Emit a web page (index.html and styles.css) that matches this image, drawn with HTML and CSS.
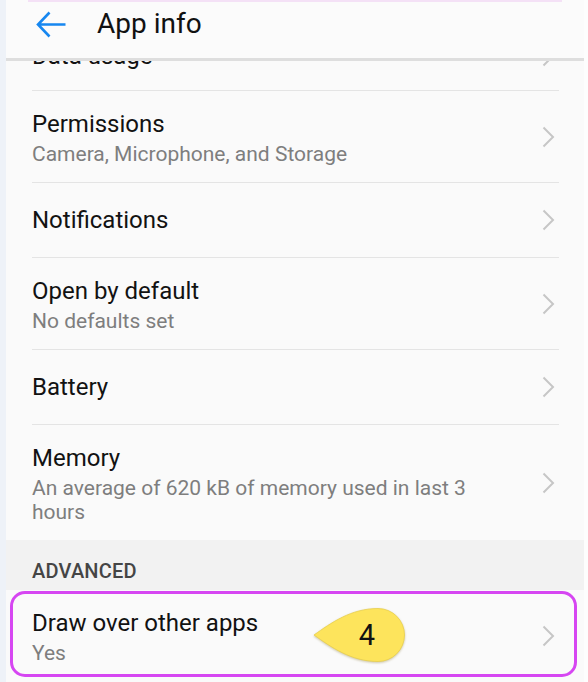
FILE: index.html
```html
<!DOCTYPE html>
<html lang="en">
<head>
<meta charset="utf-8">
<title>App info</title>
<link rel="stylesheet" href="styles.css">
</head>
<body>
<div class="screen">
  <div class="edge"></div>
  <div class="panel">
    <div class="mark-top"></div>
    <header class="appbar">
      <svg class="back" width="30" height="27" viewBox="0 0 30 27" aria-hidden="true">
        <path d="M2 13.5H29.5M13.5 1.5 2 13.5 13.5 25.5" fill="none" stroke="#1787f0" stroke-width="2.6" stroke-linejoin="miter"/>
      </svg>
      <h1 class="appbar__title">App info</h1>
    </header>
    <div class="viewport">
      <ul class="list">
        <li class="row row--peek">
          <div class="row__text"><div class="row__title">Data usage</div></div>
          <svg class="chev" width="13" height="22" viewBox="0 0 13 22"><path d="M1.5 1.5 11 11 1.5 20.5" fill="none" stroke="#c6c6c6" stroke-width="2"/></svg>
        </li>
        <li class="row">
          <div class="row__text">
            <div class="row__title">Permissions</div>
            <div class="row__sub">Camera, Microphone, and Storage</div>
          </div>
          <svg class="chev" width="13" height="22" viewBox="0 0 13 22"><path d="M1.5 1.5 11 11 1.5 20.5" fill="none" stroke="#c6c6c6" stroke-width="2"/></svg>
        </li>
        <li class="row">
          <div class="row__text"><div class="row__title">Notifications</div></div>
          <svg class="chev" width="13" height="22" viewBox="0 0 13 22"><path d="M1.5 1.5 11 11 1.5 20.5" fill="none" stroke="#c6c6c6" stroke-width="2"/></svg>
        </li>
        <li class="row">
          <div class="row__text">
            <div class="row__title">Open by default</div>
            <div class="row__sub">No defaults set</div>
          </div>
          <svg class="chev" width="13" height="22" viewBox="0 0 13 22"><path d="M1.5 1.5 11 11 1.5 20.5" fill="none" stroke="#c6c6c6" stroke-width="2"/></svg>
        </li>
        <li class="row">
          <div class="row__text"><div class="row__title">Battery</div></div>
          <svg class="chev" width="13" height="22" viewBox="0 0 13 22"><path d="M1.5 1.5 11 11 1.5 20.5" fill="none" stroke="#c6c6c6" stroke-width="2"/></svg>
        </li>
        <li class="row row--last">
          <div class="row__text">
            <div class="row__title">Memory</div>
            <div class="row__sub">An average of 620 kB of memory used in last 3 hours</div>
          </div>
          <svg class="chev" width="13" height="22" viewBox="0 0 13 22"><path d="M1.5 1.5 11 11 1.5 20.5" fill="none" stroke="#c6c6c6" stroke-width="2"/></svg>
        </li>
      </ul>
      <div class="section-head">ADVANCED</div>
      <ul class="list">
        <li class="row row--marked">
          <div class="row__text">
            <div class="row__title">Draw over other apps</div>
            <div class="row__sub">Yes</div>
          </div>
          <svg class="chev" width="13" height="22" viewBox="0 0 13 22"><path d="M1.5 1.5 11 11 1.5 20.5" fill="none" stroke="#c6c6c6" stroke-width="2"/></svg>
          <div class="highlight"></div>
          <div class="callout">
            <svg class="callout__shape" width="94" height="58" viewBox="0 0 94 58" aria-hidden="true">
              <path d="M1 28 C 18 16, 38 1.5, 65 1.5 A 26.5 26.5 0 1 1 65 54.5 C 38 54.5, 18 40, 1 28 Z" fill="#fde45c" stroke="#e9cf4a" stroke-width="0.8"/>
            </svg>
            <span class="callout__num">4</span>
          </div>
        </li>
      </ul>
    </div>
  </div>
  <div class="gutter"></div>
</div>
</body>
</html>
```

FILE: styles.css
```css
* { box-sizing: border-box; }

html, body {
  margin: 0;
  padding: 0;
  background: #fdfdfd;
}

body {
  font-family: Roboto, "Noto Sans", "Liberation Sans", sans-serif;
  color: #141414;
}

.screen {
  display: flex;
  width: 588px;
  height: 682px;
  overflow: hidden;
}

.edge {
  width: 6px;
  flex: none;
  background: #eef2f8;
}

.gutter {
  flex: 1;
  background: #fdfdfd;
}

.panel {
  position: relative;
  width: 578px;
  flex: none;
  display: flex;
  flex-direction: column;
  background: #fafafa;
}

.mark-top {
  position: absolute;
  left: 22px;
  top: 0;
  width: 534px;
  height: 2px;
  background: #f4e1f6;
  z-index: 3;
}

.appbar {
  flex: none;
  height: 61px;
  display: flex;
  align-items: flex-start;
  padding: 7px 0 0 30px;
  background: #fbfbfb;
  border-bottom: 3px solid #dedede;
  position: relative;
  z-index: 2;
}

.back {
  flex: none;
  margin-top: 4px;
  display: block;
}

.appbar__title {
  margin: 0 0 0 31px;
  font-size: 28px;
  line-height: 34px;
  font-weight: 400;
  color: #111;
}

.viewport {
  flex: 1;
  overflow: hidden;
}

.list {
  list-style: none;
  margin: 0;
  padding: 0;
}

.row {
  position: relative;
  display: flex;
  align-items: center;
  min-height: 75px;
  margin: 0 25px 0 26px;
  padding: 16.5px 4px 16.5px 0;
  border-bottom: 1px solid #e4e4e4;
}

.row--peek {
  margin-top: -39px;
  min-height: 69px;
}

.row--last {
  border-bottom: none;
}

.row--marked {
  border-bottom: none;
}

.row__text {
  flex: 1;
  min-width: 0;
  padding-right: 52px;
}

.row__title {
  font-size: 24px;
  line-height: 32px;
  color: #121212;
}

.row__sub {
  margin-top: 2px;
  font-size: 21px;
  line-height: 24px;
  color: #7e7e7e;
}

.chev {
  flex: none;
  display: block;
}

.section-head {
  height: 50px;
  padding: 20px 0 0 26px;
  background: #f2f2f2;
  font-size: 20px;
  line-height: 22px;
  font-weight: 500;
  letter-spacing: 0.2px;
  color: #454545;
}

.highlight {
  position: absolute;
  left: -22px;
  right: -18px;
  top: 1px;
  height: 86px;
  border: 3px solid #d646f2;
  border-radius: 15px;
  pointer-events: none;
}

.callout {
  position: absolute;
  left: 281px;
  top: 17px;
  width: 94px;
  height: 58px;
}

.callout__shape {
  display: block;
  filter: drop-shadow(0.5px 1px 0.8px rgba(120, 100, 20, 0.35));
}

.callout__num {
  position: absolute;
  left: 35px;
  top: 0;
  width: 38px;
  height: 56px;
  display: flex;
  align-items: center;
  justify-content: center;
  font-size: 29px;
  color: #111;
}
```
